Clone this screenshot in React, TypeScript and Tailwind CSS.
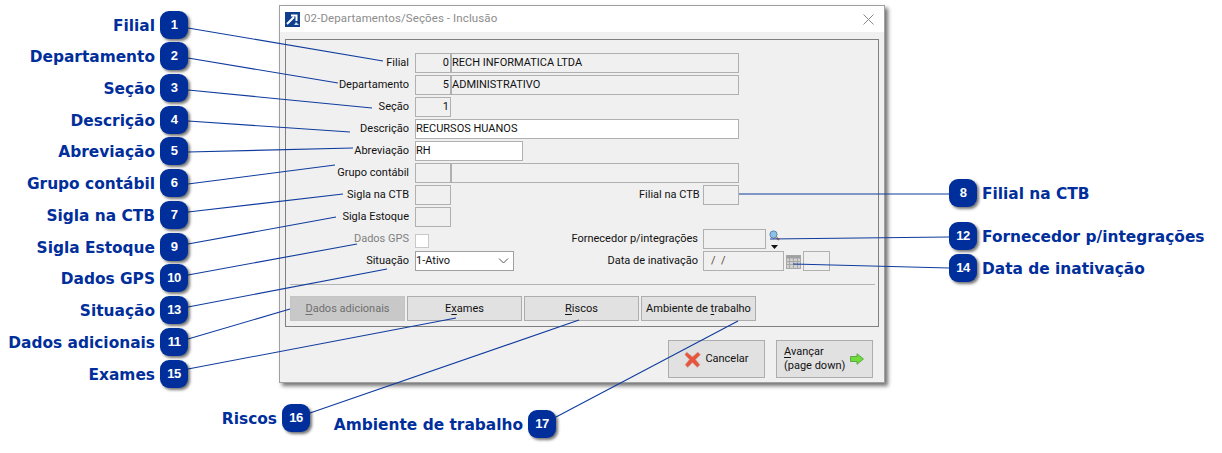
const form = "font-['Roboto',sans-serif] text-[11px] text-[#111]";

const lines = [
  [188, 28, 383, 61], [188, 58, 338, 83], [188, 90, 372, 108], [188, 121, 350, 132],
  [188, 152, 353, 148], [188, 184, 335, 165], [188, 212, 343, 194], [188, 244, 336, 217],
  [188, 275, 357, 244], [188, 307, 387, 269], [188, 339, 290, 309], [188, 369, 456, 318],
  [310, 413, 579, 320], [556, 417, 738, 321], [949, 194, 739, 194], [949, 237, 770, 239],
  [949, 268, 793, 264],
];

const leftCallouts = [
  { n: 1, label: "Filial", pos: "top-[11px]" },
  { n: 2, label: "Departamento", pos: "top-[42px]" },
  { n: 3, label: "Seção", pos: "top-[74px]" },
  { n: 4, label: "Descrição", pos: "top-[106px]" },
  { n: 5, label: "Abreviação", pos: "top-[137px]" },
  { n: 6, label: "Grupo contábil", pos: "top-[169px]" },
  { n: 7, label: "Sigla na CTB", pos: "top-[201px]" },
  { n: 9, label: "Sigla Estoque", pos: "top-[233px]" },
  { n: 10, label: "Dados GPS", pos: "top-[264px]" },
  { n: 13, label: "Situação", pos: "top-[296px]" },
  { n: 11, label: "Dados adicionais", pos: "top-[328px]" },
  { n: 15, label: "Exames", pos: "top-[360px]" },
];

function Badge({ n }: { n: number }) {
  return (
    <span className="flex h-[28px] w-[28px] shrink-0 items-center justify-center rounded-[9px] bg-[#002e9b] font-['Liberation_Sans',sans-serif] text-[13px] font-bold tracking-[-0.5px] text-white shadow-[2px_2px_3px_rgba(0,0,0,0.55)]">
      {n}
    </span>
  );
}

function Label({ children }: { children: string }) {
  return (
    <span className="whitespace-nowrap pt-[3px] font-['DejaVu_Sans',sans-serif] text-[15.4px] font-bold leading-none text-[#002e9b]">
      {children}
    </span>
  );
}

function Field({ className = "", children }: { className?: string; children?: string }) {
  return (
    <div className={`flex h-[20px] items-center overflow-hidden whitespace-pre border border-[#b0b0b0] px-[1px] pt-[1px] ${className}`}>
      {children}
    </div>
  );
}

function Row({ label, muted, children }: { label: string; muted?: boolean; children: React.ReactNode }) {
  return (
    <div className="flex h-[20px] items-center">
      <div className={`w-[125px] whitespace-nowrap pr-[6px] pt-[1px] text-right ${muted ? "text-[#808080]" : ""}`}>{label}</div>
      {children}
    </div>
  );
}

function U({ children }: { children: string }) {
  return <span className="underline underline-offset-2">{children}</span>;
}

export default function App() {
  return (
    <div className="relative h-[453px] w-[1222px] overflow-hidden bg-white">
      {/* dialog window */}
      <div className={`absolute left-[279px] top-[5px] flex h-[378px] w-[606px] flex-col border border-[#a0a0a0] bg-[#f0f0f0] shadow-[3px_3px_4px_rgba(0,0,0,0.55)] ${form}`}>
        <div className="flex h-[26px] shrink-0 items-center bg-white pl-[5px] pr-[10px]">
          <svg width="15" height="15" viewBox="0 0 15 15" className="shrink-0">
            <rect width="15" height="15" fill="#0f3f8c" />
            <path d="M2 12 L9 5 M6 3.5 H11.5 V9" stroke="#fff" strokeWidth="2" fill="none" />
            <path d="M9 13 L11 10 L14 13 Z" fill="#cfd8e8" />
          </svg>
          <span className="ml-[4px] font-['Roboto',sans-serif] text-[11.5px] tracking-[0.1px] text-[#8c8c8c]">02-Departamentos/Seções - Inclusão</span>
          <svg width="11" height="11" viewBox="0 0 11 11" className="ml-auto shrink-0">
            <path d="M0.5 0.5 L10.5 10.5 M10.5 0.5 L0.5 10.5" stroke="#8a8a8a" strokeWidth="1" />
          </svg>
        </div>

        <div className="mx-[5px] mt-[7px] flex h-[288px] shrink-0 flex-col border border-[#808080] px-[4px] pt-[13px]">
          <div className="flex flex-col gap-[2px]">
            <Row label="Filial">
              <Field className="w-[36px] justify-end">0</Field>
              <Field className="w-[288px] !px-0">RECH INFORMATICA LTDA</Field>
            </Row>
            <Row label="Departamento">
              <Field className="w-[36px] justify-end">5</Field>
              <Field className="w-[288px] !px-0">ADMINISTRATIVO</Field>
            </Row>
            <Row label="Seção">
              <Field className="w-[36px] justify-end">1</Field>
            </Row>
            <Row label="Descrição">
              <Field className="w-[324px] bg-white !px-0">RECURSOS HUANOS</Field>
            </Row>
            <Row label="Abreviação">
              <Field className="w-[108px] bg-white !px-0">RH</Field>
            </Row>
            <Row label="Grupo contábil">
              <Field className="w-[36px]" />
              <Field className="w-[288px]" />
            </Row>
            <Row label="Sigla na CTB">
              <Field className="w-[36px]" />
              <div className="ml-[188px] w-[64px] whitespace-nowrap pr-[5px] pt-[1px] text-right">Filial na CTB</div>
              <Field className="w-[36px]" />
            </Row>
            <Row label="Sigla Estoque">
              <Field className="w-[36px]" />
            </Row>
            <Row label="Dados GPS" muted>
              <div className="mt-[3px] h-[14px] w-[14px] border border-[#c8c8c8] bg-white" />
              <div className="ml-[110px] w-[164px] whitespace-nowrap pr-[5px] pt-[1px] text-right">Fornecedor p/integrações</div>
              <Field className="w-[63px]" />
              <div className="ml-[3px] flex h-[20px] flex-col items-center">
                <svg width="11" height="11" viewBox="0 0 11 11" className="mt-[1px]">
                  <circle cx="4.5" cy="4.5" r="3.6" fill="#8fc1e8" stroke="#5a86a8" />
                  <path d="M7.5 7.5 L10 10" stroke="#d9793a" strokeWidth="2" />
                </svg>
                <svg width="7" height="4" viewBox="0 0 7 4" className="mt-[4px]">
                  <path d="M0 0 H7 L3.5 4 Z" fill="#111" />
                </svg>
              </div>
            </Row>
            <Row label="Situação">
              <div className="flex h-[20px] w-[99px] items-center justify-between border border-[#a0a0a0] bg-white pr-[4px]">
                1-Ativo
                <svg width="11" height="6" viewBox="0 0 11 6"><path d="M1 0.5 L5.5 5 L10 0.5" stroke="#555" fill="none" /></svg>
              </div>
              <div className="ml-[84px] w-[105px] whitespace-nowrap pr-[5px] pt-[1px] text-right">Data de inativação</div>
              <Field className="w-[81px] !px-[7px] text-[#5a4a30]">{"/  /"}</Field>
              <svg width="15" height="15" viewBox="0 0 15 15" className="ml-[2px] shrink-0">
                <rect x="0.5" y="1.5" width="14" height="13" fill="#d2d2d2" stroke="#a8a8a8" />
                <rect x="0.5" y="1.5" width="14" height="3" fill="#a0a0a0" />
                <path d="M0 7.5 H15 M0 10.5 H15 M3.5 4 V15 M7.5 4 V15 M11.5 4 V15" stroke="#a8a8a8" />
              </svg>
              <Field className="ml-[2px] w-[27px]" />
            </Row>
          </div>

          <div className="mt-[13px] h-[1px] w-[585px] bg-[#b4b4b4]" />

          <div className="mt-[11px] flex gap-[2px]">
            <div className="flex h-[25px] w-[115px] items-center justify-center border border-[#c4c4c4] bg-[#c8c8c8] pt-[1px] text-[#6f6f6f]"><span><U>D</U>ados adicionais</span></div>
            <div className="flex h-[25px] w-[115px] items-center justify-center border border-[#adadad] bg-[#e1e1e1] pt-[1px]"><span>E<U>x</U>ames</span></div>
            <div className="flex h-[25px] w-[115px] items-center justify-center border border-[#adadad] bg-[#e1e1e1] pt-[1px]"><span><U>R</U>iscos</span></div>
            <div className="flex h-[25px] w-[115px] items-center justify-center whitespace-nowrap border border-[#adadad] bg-[#e1e1e1] pt-[1px]"><span>Ambiente de <U>t</U>rabalho</span></div>
          </div>
        </div>

        <div className="mr-[11px] mt-[13px] flex justify-end gap-[11px]">
          <div className="flex h-[38px] w-[97px] items-center justify-center gap-[4px] border border-[#adadad] bg-[#e1e1e1]">
            <svg width="17" height="17" viewBox="0 0 16 16">
              <path d="M2.5 1 L8 5.5 L13 1 L15.5 3.5 L11 8 L15 13 L12.5 15.5 L8 11 L3.5 15.5 L1 13 L5 8 L0.8 3.5 Z" fill="#e8553e" stroke="#c9b4a0" strokeWidth="0.6" />
            </svg>
            <span>Cancelar</span>
          </div>
          <div className="flex h-[38px] w-[97px] items-center justify-between border border-[#adadad] bg-[#e1e1e1] pl-[7px] pr-[8px]">
            <span className="leading-[14px]"><U>A</U>vançar<br />(page down)</span>
            <svg width="14" height="12" viewBox="0 0 14 12">
              <path d="M0.5 3.5 H7 V0.7 L13.5 6 L7 11.3 V8.5 H0.5 Z" fill="#6fdc3c" stroke="#4d9a36" strokeWidth="0.8" />
            </svg>
          </div>
        </div>
      </div>

      {/* leader lines */}
      <svg className="absolute left-0 top-0" width="1222" height="453" viewBox="0 0 1222 453">
        {lines.map(([x1, y1, x2, y2], i) => (
          <line key={i} x1={x1} y1={y1} x2={x2} y2={y2} stroke="#0f3c9e" strokeWidth="1.1" />
        ))}
      </svg>

      {/* callouts */}
      {leftCallouts.map((c) => (
        <div key={c.n} className={`absolute right-[1034px] flex items-center gap-[5px] ${c.pos}`}>
          <Label>{c.label}</Label>
          <Badge n={c.n} />
        </div>
      ))}
      <div className="absolute right-[912px] top-[404px] flex items-center gap-[5px]"><Label>Riscos</Label><Badge n={16} /></div>
      <div className="absolute right-[666px] top-[410px] flex items-center gap-[5px]"><Label>Ambiente de trabalho</Label><Badge n={17} /></div>
      <div className="absolute left-[949px] top-[179px] flex items-center gap-[5px]"><Badge n={8} /><Label>Filial na CTB</Label></div>
      <div className="absolute left-[949px] top-[222px] flex items-center gap-[5px]"><Badge n={12} /><Label>Fornecedor p/integrações</Label></div>
      <div className="absolute left-[949px] top-[254px] flex items-center gap-[5px]"><Badge n={14} /><Label>Data de inativação</Label></div>
    </div>
  );
}
